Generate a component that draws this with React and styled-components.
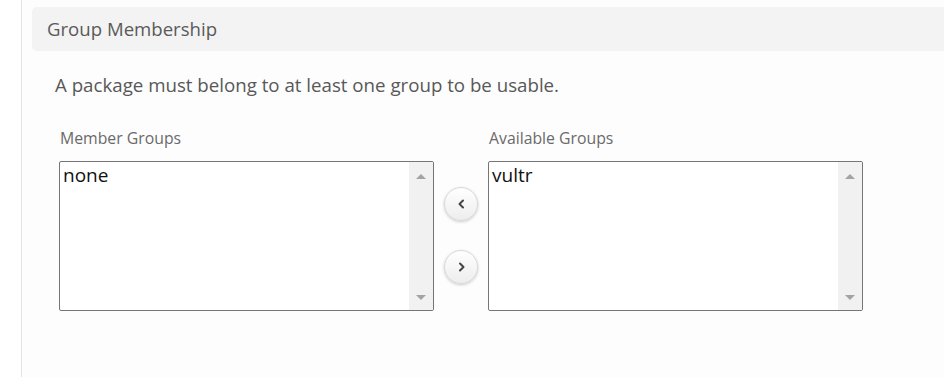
import React from "react";
import styled, { createGlobalStyle } from "styled-components";

const GlobalStyle = createGlobalStyle`
  html, body { margin: 0; padding: 0; background: #ffffff; }
  body { font-family: "Open Sans", "Liberation Sans", sans-serif; }
  * { box-sizing: border-box; }
`;

const Page = styled.div`
  display: flex;
  min-height: 377px;
  overflow: hidden;
`;

const Gutter = styled.div`
  width: 22px;
  flex: none;
  background: #ffffff;
  border-right: 1px solid #e2e2e2;
`;

const Content = styled.div`
  flex: 1;
  background: #fdfdfd;
  padding: 7px 0 0 10px;
  min-width: 0;
`;

const SectionHeader = styled.div`
  height: 44px;
  margin-right: -12px;
  background: #f3f3f3;
  border-radius: 5px;
  padding-left: 15px;
  font-size: 18.6px;
  line-height: 44px;
  color: #5a5a5a;
`;

const Description = styled.p`
  margin: 21px 0 0 23px;
  font-size: 18.7px;
  line-height: 25px;
  color: #585858;
`;

const Picker = styled.div`
  display: flex;
  align-items: flex-start;
  margin: 31px 0 0 27px;
`;

const Column = styled.div`
  display: flex;
  flex-direction: column;
  width: 375px;
`;

const Label = styled.div`
  font-size: 15.8px;
  line-height: 20px;
  color: #6a6a6a;
  padding-left: 1px;
  margin-bottom: 13px;
`;

const ListBox = styled.div`
  display: flex;
  height: 150px;
  background: #ffffff;
  border: 1px solid #767676;
  border-radius: 2px;
  overflow: hidden;
`;

const Options = styled.div`
  flex: 1;
  padding: 0 3px;
  font-size: 19px;
  line-height: 26px;
  color: #111111;
`;

const ScrollTrack = styled.div`
  width: 24px;
  flex: none;
  background: #f1f1f1;
  display: flex;
  flex-direction: column;
  justify-content: space-between;
  align-items: center;
  padding: 12px 0 10px;
`;

const Arrow = styled.span`
  width: 0;
  height: 0;
  border-left: 5px solid transparent;
  border-right: 5px solid transparent;
  ${(p) =>
    p.$down
      ? "border-top: 5px solid #a3a3a3;"
      : "border-bottom: 5px solid #a3a3a3;"}
`;

const Controls = styled.div`
  width: 54px;
  flex: none;
  display: flex;
  flex-direction: column;
  align-items: center;
  gap: 29px;
  padding-top: 59px;
`;

const RoundButton = styled.button`
  width: 34px;
  height: 34px;
  border-radius: 50%;
  border: 1px solid #d8d8d8;
  background: linear-gradient(#ffffff, #ededed);
  box-shadow: 0 1px 3px rgba(0, 0, 0, 0.2);
  padding: 0;
  display: flex;
  align-items: center;
  justify-content: center;
  cursor: pointer;
`;

const Chevron = ({ dir }) => (
  <svg width="9" height="10" viewBox="0 0 9 10">
    <path
      d={dir === "left" ? "M6 1.5 L2.5 5 L6 8.5" : "M3 1.5 L6.5 5 L3 8.5"}
      fill="none"
      stroke="#444"
      strokeWidth="2"
      strokeLinecap="round"
      strokeLinejoin="round"
    />
  </svg>
);

const GroupList = ({ label, items }) => (
  <Column>
    <Label>{label}</Label>
    <ListBox>
      <Options>
        {items.map((i) => (
          <div key={i}>{i}</div>
        ))}
      </Options>
      <ScrollTrack>
        <Arrow />
        <Arrow $down />
      </ScrollTrack>
    </ListBox>
  </Column>
);

export default function App() {
  return (
    <>
      <GlobalStyle />
      <Page>
        <Gutter />
        <Content>
          <SectionHeader>Group Membership</SectionHeader>
          <Description>A package must belong to at least one group to be usable.</Description>
          <Picker>
            <GroupList label="Member Groups" items={["none"]} />
            <Controls>
              <RoundButton aria-label="Add to member groups">
                <Chevron dir="left" />
              </RoundButton>
              <RoundButton aria-label="Remove from member groups">
                <Chevron dir="right" />
              </RoundButton>
            </Controls>
            <GroupList label="Available Groups" items={["vultr"]} />
          </Picker>
        </Content>
      </Page>
    </>
  );
}
